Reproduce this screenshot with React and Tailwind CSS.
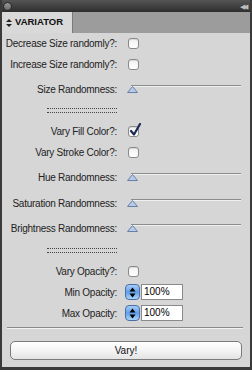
import React from "react";

const font = { fontFamily: '"Liberation Sans", Arial, sans-serif' };

function Checkbox({ checked }) {
  return (
    <div className="relative w-[11px] h-[11px] rounded-[3px] border border-[#8a8a8a] bg-gradient-to-b from-[#f2f2f2] to-white shadow-[inset_0_1px_1px_rgba(0,0,0,0.12)]">
      {checked && (
        <svg className="absolute -top-[4px] left-[0px]" width="13" height="14" viewBox="0 0 13 14">
          <path d="M2 8 L5 11.5 L11 1" fill="none" stroke="#1a2a55" strokeWidth="2.2" strokeLinecap="round" strokeLinejoin="round" />
        </svg>
      )}
    </div>
  );
}

function Slider() {
  return (
    <div className="relative -ml-[1px] w-[114px] h-[8px]">
      <div className="absolute left-[4px] right-0 top-0 h-[2px] bg-[#8c8c8c] border-b border-[#f0f0f0]" />
      <svg className="absolute left-0 top-[1px]" width="11" height="7" viewBox="0 0 11 7">
        <path d="M5.5 0.5 L10.5 6.5 L0.5 6.5 Z" fill="#b8cbe8" stroke="#6a7fa8" strokeWidth="1" />
      </svg>
    </div>
  );
}

function Stepper({ value }) {
  return (
    <div className="flex items-center -ml-[3px]">
      <div className="w-[15px] h-[16px] rounded-[4px] border border-[#4a6fa8] bg-gradient-to-b from-[#a8cdf5] via-[#5f9ee8] to-[#a9d4f7] flex items-center justify-center">
        <svg width="7" height="11" viewBox="0 0 7 11">
          <path d="M3.5 0.5 L6.5 4.5 L0.5 4.5 Z" fill="#000" />
          <path d="M3.5 10.5 L6.5 6.5 L0.5 6.5 Z" fill="#000" />
        </svg>
      </div>
      <div className="ml-[1px] w-[42px] h-[16px] border border-[#8a8a8a] bg-white text-[10px] leading-[14px] pl-[2px] text-black">
        {value}
      </div>
    </div>
  );
}

function Row({ label, mt, children }) {
  return (
    <div className="flex items-center h-[16px]" style={{ marginTop: mt }}>
      <div className="w-[115px] text-right text-[10px] text-[#222] whitespace-nowrap tracking-[-0.25px]">{label}</div>
      <div className="ml-[11px] flex items-center">{children}</div>
    </div>
  );
}

function Dots({ mt }) {
  return (
    <div className="flex items-center h-[16px]" style={{ marginTop: mt }}>
      <div className="w-[115px] flex justify-end">
        <div className="w-[70px] h-[5px] border-t border-b border-dotted border-[#444]" />
      </div>
    </div>
  );
}

export default function App() {
  return (
    <div className="w-[252px] h-[370px] bg-[#d6d6d6] border-x-2 border-b-[3px] border-[#3a3a3a] flex flex-col overflow-hidden" style={font}>
      <div className="h-[12px] bg-gradient-to-b from-[#555] to-[#2e2e2e] flex items-center justify-between px-[1px] shrink-0">
        <div className="w-[9px] h-[9px] rounded-full bg-gradient-to-b from-[#9a9a9a] to-[#6a6a6a] border border-[#2a2a2a]" />
        <div className="text-[#bdbdbd] text-[7px] leading-none tracking-[-2px] pr-[3px]">◀◀</div>
      </div>
      <div className="h-[21px] bg-[#9c9c9c] flex items-end shrink-0">
        <div className="h-[21px] w-[71px] bg-[#d9d9d9] flex items-center pl-[4px] text-[9.5px] font-bold text-[#111] border-r border-[#7a7a7a]">
          <svg className="mr-[3px]" width="6" height="8" viewBox="0 0 6 8">
            <path d="M3 0 L6 3 L0 3 Z" fill="#222" />
            <path d="M3 8 L6 5 L0 5 Z" fill="#222" />
          </svg>
          VARIATOR
        </div>
      </div>
      <div className="flex flex-col pt-[2px]">
        <Row label="Decrease Size randomly?:" mt={0}><Checkbox /></Row>
        <Row label="Increase Size randomly?:" mt={5}><Checkbox /></Row>
        <Row label="Size Randomness:" mt={9}><Slider /></Row>
        <Dots mt={5} />
        <Row label="Vary Fill Color?:" mt={5}><Checkbox checked /></Row>
        <Row label="Vary Stroke Color?:" mt={5}><Checkbox /></Row>
        <Row label="Hue Randomness:" mt={9}><Slider /></Row>
        <Row label="Saturation Randomness:" mt={10}><Slider /></Row>
        <Row label="Brightness Randomness:" mt={9}><Slider /></Row>
        <Dots mt={6} />
        <Row label="Vary Opacity?:" mt={5}><Checkbox /></Row>
        <Row label="Min Opacity:" mt={5}><Stepper value="100%" /></Row>
        <Row label="Max Opacity:" mt={5}><Stepper value="100%" /></Row>
      </div>
      <div className="ml-[5px] mr-[7px] mt-[6px] h-[2px] border-t border-[#8a8a8a] border-b border-b-[#f2f2f2] shrink-0" />
      <div className="mx-[8px] mt-[12px] h-[19px] shrink-0 rounded-[5px] border border-[#7a7a7a] bg-gradient-to-b from-white via-[#f4f4f4] to-[#e4e4e4] flex items-center justify-center text-[10px] text-[#111]">
        Vary!
      </div>
    </div>
  );
}
